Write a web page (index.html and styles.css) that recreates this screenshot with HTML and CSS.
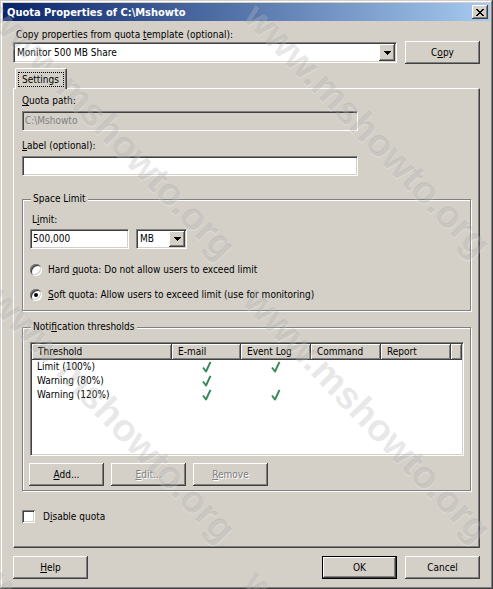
FILE: index.html
```html
<!DOCTYPE html>
<html>
<head>
<meta charset="utf-8">
<title>Quota Properties</title>
<link rel="stylesheet" href="styles.css">
</head>
<body>
<div class="window">
  <div class="titlebar">
    <span class="title">Quota Properties of C:\Mshowto</span>
    <span class="close"><svg width="8" height="7" viewBox="0 0 8 7"><path d="M0 0h2v1h1v1h2v-1h1v-1h2v1h-1v1h-1v1h-1v1h1v1h1v1h1v1h-2v-1h-1v-1h-2v1h-1v1h-2v-1h1v-1h1v-1h1v-1h-1v-1h-1v-1h-1z" fill="#000"/></svg></span>
  </div>
  <div class="content">
    <div class="lbl top-lbl">Copy properties from quota <u>t</u>emplate (optional):</div>
    <div class="combo-row">
      <div class="combo wide"><span class="combo-text">Monitor 500 MB Share</span><span class="drop"><svg width="7" height="4" viewBox="0 0 7 4"><path d="M0 0h7v1h-1v1h-1v1h-1v1h-1v-1h-1v-1h-1v-1h-1z" fill="#000"/></svg></span></div>
      <button class="btn">C<u>o</u>py</button>
    </div>
    <div class="tabs"><div class="tab"><span class="focus">Settings</span></div></div>
    <div class="panel">
      <div class="lbl l-first"><u>Q</u>uota path:</div>
      <div class="field disabled w-path">C:\Mshowto</div>
      <div class="lbl l-next"><u>L</u>abel (optional):</div>
      <div class="field w-path"></div>

      <div class="group g1">
        <span class="legend">Space Limit</span>
        <div class="lbl l-limit">L<u>i</u>mit:</div>
        <div class="limit-row">
          <div class="field w-limit">500,000</div>
          <div class="combo mb"><span class="combo-text">MB</span><span class="drop"><svg width="7" height="4" viewBox="0 0 7 4"><path d="M0 0h7v1h-1v1h-1v1h-1v1h-1v-1h-1v-1h-1v-1h-1z" fill="#000"/></svg></span></div>
        </div>
        <div class="option opt1"><span class="radio"></span><span>Hard <u>q</u>uota: Do not allow users to exceed limit</span></div>
        <div class="option opt2"><span class="radio on"></span><span><u>S</u>oft quota: Allow users to exceed limit (use for monitoring)</span></div>
      </div>

      <div class="group g2">
        <span class="legend">Noti<u>f</u>ication thresholds</span>
        <div class="listview">
          <div class="lv-grid lv-head">
            <div class="hc">Threshold</div>
            <div class="hc">E-mail</div>
            <div class="hc">Event Log</div>
            <div class="hc">Command</div>
            <div class="hc">Report</div>
            <div class="hc"></div>
          </div>
          <div class="lv-grid lv-row">
            <div class="cell">Limit (100%)</div>
            <div class="cell ck"><svg width="10" height="12" viewBox="0 0 10 12"><path d="M1 6.5 L4 10.5 L8.5 0.8" fill="none" stroke="#3b8a5e" stroke-width="2" stroke-linejoin="round"/></svg></div>
            <div class="cell ck"><svg width="10" height="12" viewBox="0 0 10 12"><path d="M1 6.5 L4 10.5 L8.5 0.8" fill="none" stroke="#3b8a5e" stroke-width="2" stroke-linejoin="round"/></svg></div>
            <div class="cell"></div><div class="cell"></div><div class="cell"></div>
          </div>
          <div class="lv-grid lv-row">
            <div class="cell">Warning (80%)</div>
            <div class="cell ck"><svg width="10" height="12" viewBox="0 0 10 12"><path d="M1 6.5 L4 10.5 L8.5 0.8" fill="none" stroke="#3b8a5e" stroke-width="2" stroke-linejoin="round"/></svg></div>
            <div class="cell"></div><div class="cell"></div><div class="cell"></div><div class="cell"></div>
          </div>
          <div class="lv-grid lv-row">
            <div class="cell">Warning (120%)</div>
            <div class="cell ck"><svg width="10" height="12" viewBox="0 0 10 12"><path d="M1 6.5 L4 10.5 L8.5 0.8" fill="none" stroke="#3b8a5e" stroke-width="2" stroke-linejoin="round"/></svg></div>
            <div class="cell ck"><svg width="10" height="12" viewBox="0 0 10 12"><path d="M1 6.5 L4 10.5 L8.5 0.8" fill="none" stroke="#3b8a5e" stroke-width="2" stroke-linejoin="round"/></svg></div>
            <div class="cell"></div><div class="cell"></div><div class="cell"></div>
          </div>
        </div>
        <div class="btn-row">
          <button class="btn"><u>A</u>dd...</button>
          <button class="btn dis"><u>E</u>dit...</button>
          <button class="btn dis"><u>R</u>emove</button>
        </div>
      </div>

      <div class="check-row"><span class="checkbox"></span><span>D<u>i</u>sable quota</span></div>
    </div>
    <div class="footer">
      <button class="btn"><u>H</u>elp</button>
      <div class="right-btns">
        <button class="btn default">OK</button>
        <button class="btn">Cancel</button>
      </div>
    </div>
  </div>
  <div class="watermark" aria-hidden="true">
    <span class="wm wm1">www.mshowto.org</span>
    <span class="wm wm2">www.mshowto.org</span>
    <span class="wm wm3">www.mshowto.org</span>
    <span class="wm wm4">www.mshowto.org</span>
    <span class="wm wm5">www.mshowto.org</span>
    <span class="wm wm6">www.mshowto.org</span>
  </div>
</div>
</body>
</html>
```

FILE: styles.css
```css
* { box-sizing: border-box; }
html, body { margin: 0; padding: 0; }
body {
  width: 493px;
  height: 589px;
  overflow: hidden;
  background: #D4D0C8;
  font-family: "DejaVu Sans Condensed", "DejaVu Sans", sans-serif;
  font-stretch: condensed;
  font-size: 10px;
  color: #000;
}
u { text-decoration: underline; text-underline-offset: 1px; }

.window {
  position: relative;
  width: 493px;
  height: 589px;
  background: #D4D0C8;
  padding: 3px;
  display: flex;
  flex-direction: column;
  box-shadow: inset -1px -1px #404040, inset 1px 1px #D4D0C8, inset -2px -2px #808080, inset 2px 2px #fff;
}

.titlebar {
  flex: none;
  height: 18px;
  background: linear-gradient(to right, #0A246A, #A6CAF0);
  display: flex;
  align-items: center;
  justify-content: space-between;
  padding-left: 4px;
  padding-right: 2px;
}
.title {
  color: #fff;
  font-weight: bold;
  font-size: 11px;
  white-space: nowrap;
}
.close {
  width: 16px;
  height: 14px;
  background: #D4D0C8;
  display: flex;
  align-items: center;
  justify-content: center;
  box-shadow: inset -1px -1px #404040, inset 1px 1px #fff, inset -2px -2px #808080;
}

.content {
  flex: 1;
  display: flex;
  flex-direction: column;
  padding: 7px 10px 0 10px;
}
.lbl { line-height: 13px; height: 13px; white-space: nowrap; }
.top-lbl { padding-left: 3px; }

.combo-row {
  flex: none;
  height: 23px;
  display: flex;
  align-items: center;
  justify-content: space-between;
}
.combo {
  height: 21px;
  background: #fff;
  border: 1px solid;
  border-color: #808080 #fff #fff #808080;
  box-shadow: inset 1px 1px #404040, inset -1px -1px #D4D0C8;
  padding: 1px;
  display: flex;
}
.combo.wide { width: 384px; }
.combo-text { flex: 1; padding-left: 2px; line-height: 17px; white-space: nowrap; overflow: hidden; }
.drop {
  width: 16px;
  height: 17px;
  background: #D4D0C8;
  display: flex;
  align-items: center;
  justify-content: center;
  box-shadow: inset -1px -1px #404040, inset 1px 1px #fff, inset -2px -2px #808080;
}
.drop svg { display: block; }

.btn {
  width: 75px;
  height: 23px;
  padding: 0;
  border: none;
  background: #D4D0C8;
  font: inherit;
  font-stretch: condensed;
  color: #000;
  box-shadow: inset -1px -1px #404040, inset 1px 1px #fff, inset -2px -2px #808080;
}
.btn.default {
  box-shadow: inset 0 0 0 1px #000, inset -2px -2px #404040, inset 2px 2px #fff, inset -3px -3px #808080;
}
.btn.dis { color: #808080; text-shadow: 1px 1px #fff; }

.tabs {
  flex: none;
  margin-top: 4px;
  height: 20px;
  display: flex;
  padding-left: 2px;
}
.tab {
  position: relative;
  z-index: 1;
  width: 52px;
  height: 21px;
  margin-bottom: -1px;
  background: #D4D0C8;
  border-left: 1px solid #fff;
  border-top: 1px solid #fff;
  border-right: 1px solid #404040;
  border-top-left-radius: 2px;
  border-top-right-radius: 2px;
  box-shadow: inset -1px 0 #808080;
  padding: 3px 0 0 2px;
}
.focus {
  display: block;
  width: 46px;
  height: 15px;
  border: 1px dotted #000;
  line-height: 13px;
  padding-left: 3px;
}

.panel {
  flex: none;
  height: 460px;
  border: 1px solid;
  border-color: #fff #404040 #404040 #fff;
  box-shadow: inset -1px -1px #808080;
  padding: 5px 8px 0 8px;
  display: flex;
  flex-direction: column;
}
.l-next { margin-top: 8px; }

.field {
  flex: none;
  height: 20px;
  background: #fff;
  border: 1px solid;
  border-color: #808080 #fff #fff #808080;
  box-shadow: inset 1px 1px #404040, inset -1px -1px #D4D0C8;
  padding: 0 2px;
  line-height: 18px;
  white-space: nowrap;
  margin-top: 4px;
}
.field.disabled { background: #D4D0C8; color: #808080; }
.w-path { width: 336px; }

.group {
  flex: none;
  position: relative;
  border: 1px solid #808080;
  box-shadow: inset 1px 1px #fff, 1px 1px #fff;
  padding: 0 7px;
}
.legend {
  position: absolute;
  top: -8px;
  left: 8px;
  padding: 0 2px;
  line-height: 13px;
  background: #D4D0C8;
  white-space: nowrap;
}
.g1 { margin-top: 23px; height: 112px; padding-top: 13px; }
.l-limit { padding-left: 2px; }
.limit-row { display: flex; gap: 7px; margin-top: 3px; }
.limit-row .field { margin-top: 0; }
.w-limit { width: 99px; }
.combo.mb { width: 51px; height: 20px; }
.combo.mb .combo-text { line-height: 16px; }
.combo.mb .drop { height: 16px; }

.option {
  display: flex;
  align-items: center;
  gap: 6px;
  height: 13px;
  line-height: 13px;
  white-space: nowrap;
}
.opt1 { margin-top: 14px; }
.opt2 { margin-top: 12px; }
.radio {
  position: relative;
  flex: none;
  width: 12px;
  height: 12px;
  border-radius: 50%;
  background: #fff;
  box-shadow: inset 1px 1px #808080, inset -1px -1px #fff, inset 2px 2px #404040, inset -2px -2px #D4D0C8;
}
.radio.on::after {
  content: "";
  position: absolute;
  left: 4px;
  top: 4px;
  width: 4px;
  height: 4px;
  border-radius: 50%;
  background: #000;
}

.g2 { margin-top: 16px; height: 164px; padding-top: 14px; }
.listview {
  width: 434px;
  height: 114px;
  background: #fff;
  border: 1px solid;
  border-color: #808080 #fff #fff #808080;
  box-shadow: inset 1px 1px #404040, inset -1px -1px #D4D0C8;
  padding: 1px;
}
.lv-grid {
  display: grid;
  grid-template-columns: 140px 69px 70px 70px 70px 1fr;
}
.lv-head { height: 16px; }
.hc {
  background: #D4D0C8;
  line-height: 16px;
  padding-left: 6px;
  white-space: nowrap;
  box-shadow: inset -1px -1px #404040, inset 1px 1px #fff, inset -2px -2px #808080;
}
.lv-row { height: 14px; }
.cell { line-height: 14px; padding-left: 5px; white-space: nowrap; }
.cell.ck { padding-left: 0; display: flex; justify-content: center; align-items: center; }
.cell.ck svg { display: block; }

.btn-row { display: flex; gap: 7px; margin-top: 7px; margin-left: -1px; }

.check-row {
  display: flex;
  align-items: center;
  gap: 8px;
  margin-top: 19px;
  height: 13px;
  line-height: 13px;
}
.checkbox {
  flex: none;
  width: 13px;
  height: 13px;
  background: #fff;
  box-shadow: inset 1px 1px #808080, inset -1px -1px #fff, inset 2px 2px #404040, inset -2px -2px #D4D0C8;
}

.footer {
  flex: none;
  margin-top: 8px;
  display: flex;
  justify-content: space-between;
}
.right-btns { display: flex; gap: 8px; }

.watermark {
  position: absolute;
  inset: 0;
  overflow: hidden;
  pointer-events: none;
}
.wm {
  position: absolute;
  transform: translate(-50%, -50%) rotate(46deg);
  font-family: "Liberation Sans", sans-serif;
  font-weight: bold;
  font-size: 38px;
  color: rgba(110, 110, 110, 0.16);
  text-shadow: 1px 1px rgba(255, 255, 255, 0.2);
  white-space: nowrap;
}
.wm1 { left: 367px; top: 130px; }
.wm2 { left: 112px; top: 132px; }
.wm3 { left: 112px; top: 415px; }
.wm4 { left: 367px; top: 415px; }
.wm5 { left: 367px; top: 698px; }
.wm6 { left: 112px; top: 698px; }
```
